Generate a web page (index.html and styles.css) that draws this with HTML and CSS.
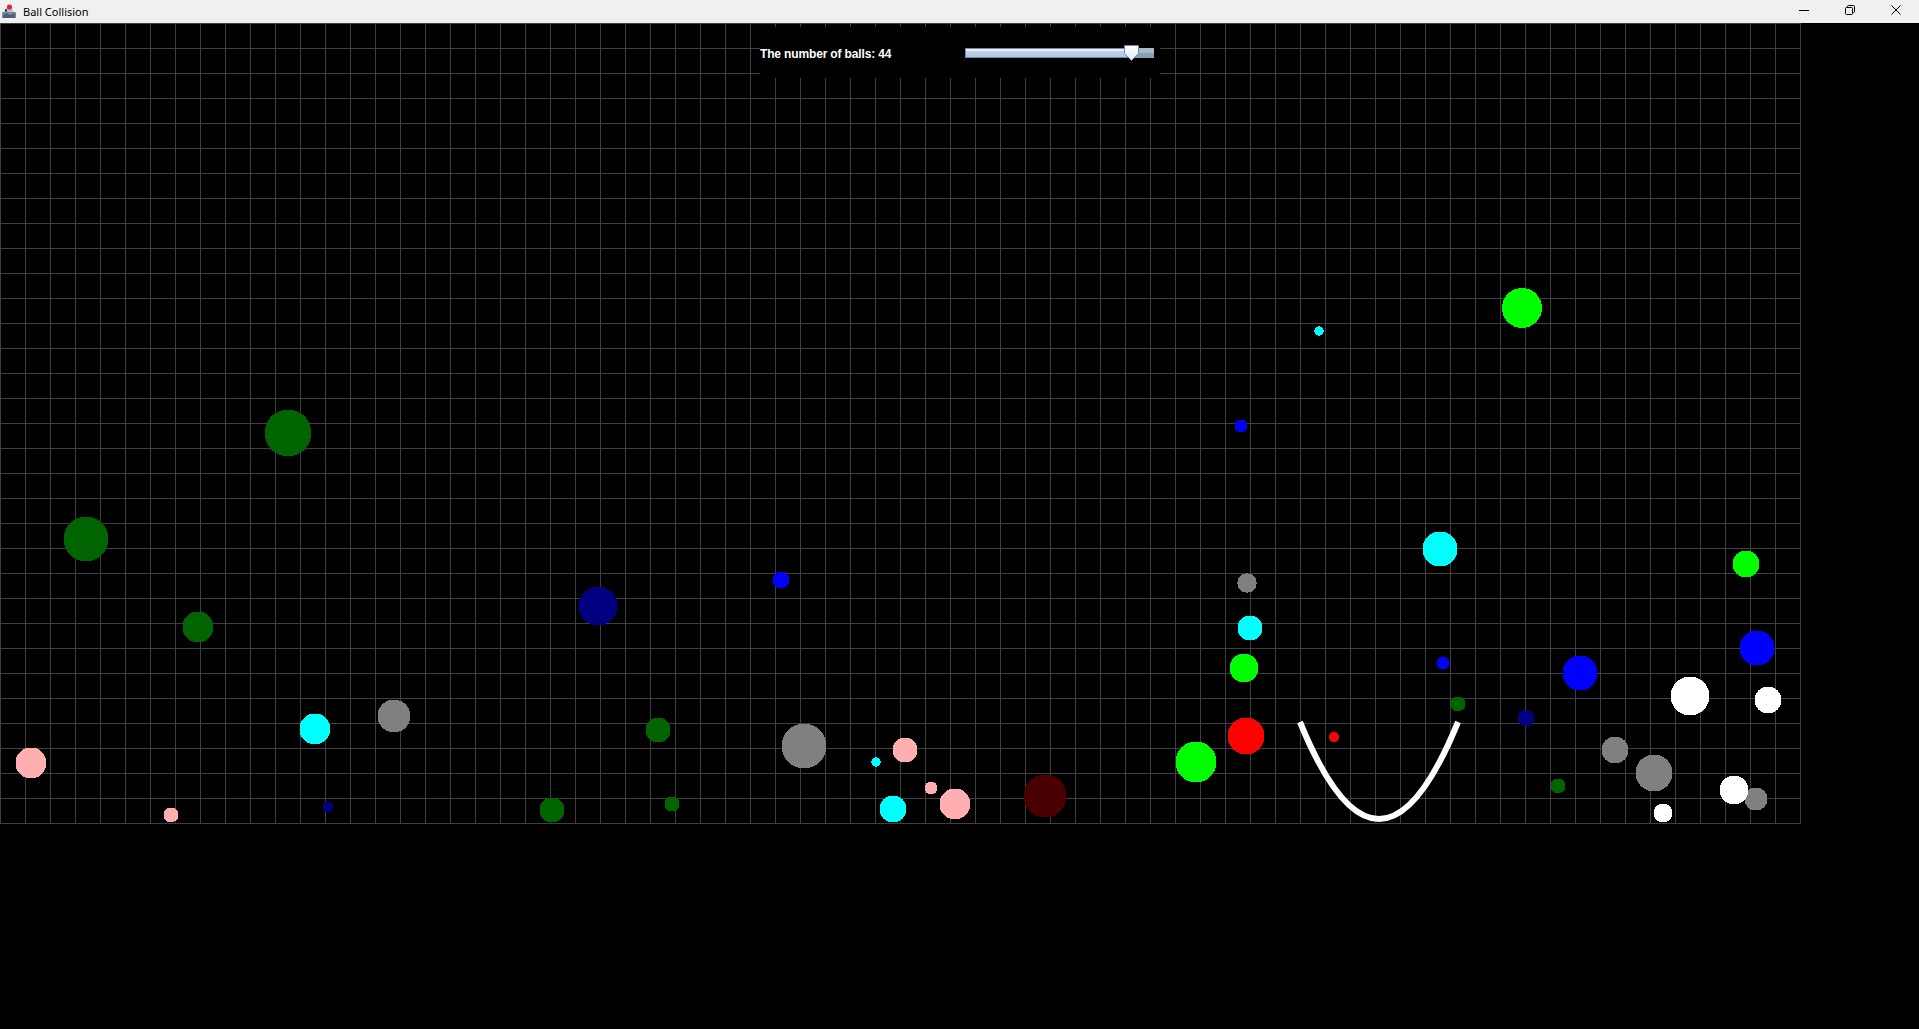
FILE: index.html
```html
<!DOCTYPE html>
<html lang="en">
<head>
<meta charset="utf-8">
<title>Ball Collision</title>
<link rel="stylesheet" href="styles.css">
</head>
<body>
<div class="window">
  <header class="titlebar">
    <div class="title-left">
      <svg class="app-icon" width="16" height="16" viewBox="0 0 16 16">
        <rect x="1" y="9" width="14" height="6" fill="#7d8fa6"/>
        <path d="M3 9 L6 4 L10 4 L13 9 Z" fill="#b9c4d2"/>
        <path d="M2 12 L6 10 L9 12 L14 10 L14 15 L2 15 Z" fill="#4c5d74"/>
        <circle cx="8.5" cy="4" r="2.6" fill="#e0262c"/>
        <rect x="4" y="6" width="2" height="3" fill="#3b4b60"/>
      </svg>
      <span class="title">Ball Collision</span>
    </div>
    <div class="controls">
      <div class="ctl">
        <svg width="10" height="10" viewBox="0 0 10 10"><line x1="0" y1="5.5" x2="10" y2="5.5" stroke="#000" stroke-width="1"/></svg>
      </div>
      <div class="ctl">
        <svg width="10" height="10" viewBox="0 0 10 10" fill="none" stroke="#000" stroke-width="1"><rect x="0.5" y="2.5" width="7" height="7" rx="1"/><path d="M2.5 2.5 V1.5 Q2.5 0.5 3.5 0.5 H8.5 Q9.5 0.5 9.5 1.5 V6.5 Q9.5 7.5 8.5 7.5 H7.5"/></svg>
      </div>
      <div class="ctl">
        <svg width="10" height="10" viewBox="0 0 10 10"><path d="M0.5 0.5 L9.5 9.5 M9.5 0.5 L0.5 9.5" stroke="#000" stroke-width="1"/></svg>
      </div>
    </div>
  </header>

  <main class="stage">
    <div class="canvas">
      <svg class="world" width="1801" height="801" viewBox="0 23 1801 801" shape-rendering="crispEdges">
        <g>
          <circle cx="1522" cy="308" r="20" fill="#00ff00"/>
          <circle cx="1319" cy="331" r="4.75" fill="#00ffff"/>
          <circle cx="1241" cy="426" r="6.5" fill="#0000ff"/>
          <circle cx="288" cy="433" r="23.5" fill="#006400"/>
          <circle cx="86" cy="539" r="22.5" fill="#006400"/>
          <circle cx="1440" cy="549" r="17.5" fill="#00ffff"/>
          <circle cx="1746" cy="564" r="13.5" fill="#00ff00"/>
          <circle cx="781" cy="580" r="8.5" fill="#0000ff"/>
          <circle cx="1247" cy="583" r="9.75" fill="#808080"/>
          <circle cx="598" cy="606" r="19.5" fill="#000080"/>
          <circle cx="198" cy="627" r="15.5" fill="#006400"/>
          <circle cx="1250" cy="628" r="12.5" fill="#00ffff"/>
          <circle cx="1757" cy="648" r="17.5" fill="#0000ff"/>
          <circle cx="1443" cy="663" r="6.5" fill="#0000ff"/>
          <circle cx="1244" cy="668" r="14.5" fill="#00ff00"/>
          <circle cx="1580" cy="673" r="17.5" fill="#0000ff"/>
          <circle cx="1690" cy="696" r="19.5" fill="#ffffff"/>
          <circle cx="1768" cy="700" r="13.5" fill="#ffffff"/>
          <circle cx="1458" cy="704" r="7.5" fill="#006400"/>
          <circle cx="394" cy="716" r="16.5" fill="#808080"/>
          <circle cx="1526" cy="718" r="8.5" fill="#000080"/>
          <circle cx="315" cy="729" r="15.5" fill="#00ffff"/>
          <circle cx="658" cy="730" r="12.5" fill="#006400"/>
          <circle cx="1246" cy="736" r="18.5" fill="#ff0000"/>
          <circle cx="1334" cy="737" r="5" fill="#ff0000"/>
          <circle cx="804" cy="746" r="22.5" fill="#808080"/>
          <circle cx="1615" cy="750" r="13.5" fill="#808080"/>
          <circle cx="905" cy="750" r="12.5" fill="#ffafaf"/>
          <circle cx="1196" cy="762" r="20.5" fill="#00ff00"/>
          <circle cx="31" cy="763" r="15.5" fill="#ffafaf"/>
          <circle cx="876" cy="762" r="4.75" fill="#00ffff"/>
          <circle cx="1654" cy="773" r="18.5" fill="#808080"/>
          <circle cx="1558" cy="786" r="7.5" fill="#006400"/>
          <circle cx="931" cy="788" r="6.5" fill="#ffafaf"/>
          <circle cx="1756" cy="799" r="11.5" fill="#808080"/>
          <circle cx="1734" cy="790" r="14.5" fill="#ffffff"/>
          <circle cx="1045" cy="796" r="21.5" fill="#4b0000"/>
          <circle cx="955" cy="804" r="15.5" fill="#ffafaf"/>
          <circle cx="328" cy="807" r="5.5" fill="#000080"/>
          <circle cx="893" cy="809" r="13.5" fill="#00ffff"/>
          <circle cx="552" cy="810" r="12.5" fill="#006400"/>
          <circle cx="672" cy="804" r="7.5" fill="#006400"/>
          <circle cx="1663" cy="813" r="9.5" fill="#ffffff"/>
          <circle cx="171" cy="815" r="7.5" fill="#ffafaf"/>
        </g>
        <path d="M1300 722 Q1379 916 1458 722" fill="none" stroke="#ffffff" stroke-width="6" shape-rendering="auto"/>
      </svg>

      <div class="panel">
        <span class="count">The number of balls: 44</span>
        <div class="slider">
          <div class="track">
            <div class="fill" style="width: 167px"></div>
          </div>
          <svg class="thumb" width="15" height="16" viewBox="0 0 15 16">
            <defs>
              <linearGradient id="tg" x1="0" y1="0" x2="0" y2="1">
                <stop offset="0" stop-color="#ffffff"/>
                <stop offset="1" stop-color="#dfe8f4"/>
              </linearGradient>
            </defs>
            <path d="M0.5 0.5 H14.5 V8.5 L7.5 15.5 L0.5 8.5 Z" fill="url(#tg)" stroke="#6a86bd"/>
          </svg>
        </div>
      </div>
    </div>
  </main>
</div>
</body>
</html>
```

FILE: styles.css
```css
* { box-sizing: border-box; }

html, body {
  margin: 0;
  padding: 0;
  background: #000;
}

body {
  width: 1919px;
  height: 1029px;
  overflow: hidden;
  font-family: "Liberation Sans", Arial, sans-serif;
}

.window {
  display: flex;
  flex-direction: column;
  width: 1919px;
  height: 1029px;
  background: #000;
}

.titlebar {
  height: 23px;
  flex: 0 0 23px;
  background: #f0f0f0;
  display: flex;
  justify-content: space-between;
  align-items: stretch;
}

.title-left {
  display: flex;
  align-items: center;
  padding-left: 1px;
  gap: 6px;
}

.app-icon {
  display: block;
  margin-top: -2px;
}

.title {
  font-family: "Noto Sans", "Liberation Sans", sans-serif;
  font-size: 11px;
  color: #000;
  margin-top: -1px;
}

.controls {
  display: flex;
}

.ctl {
  width: 46px;
  height: 23px;
  display: flex;
  justify-content: center;
  align-items: flex-start;
  padding-top: 5px;
}

.ctl svg { display: block; }

.stage {
  flex: 1;
  background: #000;
}

.canvas {
  position: relative;
  width: 1801px;
  height: 801px;
  background-color: #000;
  background-image:
    linear-gradient(to right, #404040 1px, transparent 1px),
    linear-gradient(to bottom, #404040 1px, transparent 1px);
  background-size: 25px 25px;
}

.world {
  display: block;
  position: absolute;
  left: 0;
  top: 0;
}

.panel {
  position: absolute;
  left: 760px;
  top: 4px;
  width: 400px;
  height: 51px;
  background: #000;
  display: flex;
  align-items: center;
}

.count {
  width: 205px;
  flex: 0 0 205px;
  font-family: "Liberation Sans", Arial, sans-serif;
  font-weight: bold;
  font-size: 12px;
  line-height: 14px;
  letter-spacing: -0.15px;
  color: #ffffff;
  margin-top: 3px;
}

.slider {
  position: relative;
  width: 189px;
  height: 10px;
}

.track {
  position: absolute;
  inset: 0;
  background: linear-gradient(to bottom, #a9bacb 0, #a9bacb 50%, #8d9eb0 50%, #8d9eb0 100%);
}

.fill {
  position: absolute;
  left: 0;
  top: 0;
  bottom: 0;
  border: 1px solid #6f89bb;
  background: linear-gradient(to bottom, #eaf0f8 0, #eaf0f8 25%, #c3d3e7 25%, #b3c6de 100%);
}

.thumb {
  position: absolute;
  left: 159px;
  top: -3px;
  display: block;
}
```
